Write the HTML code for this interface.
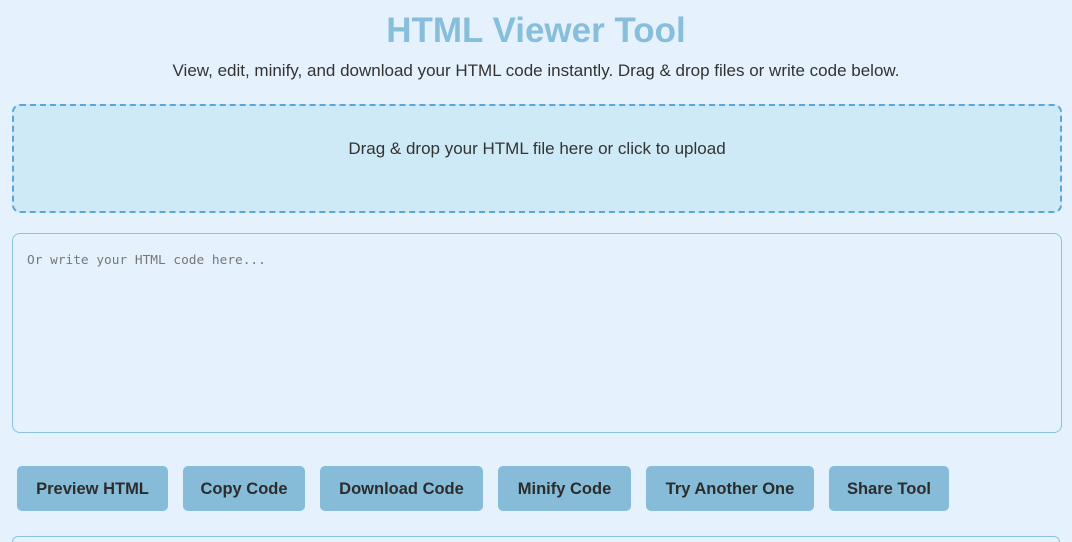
<!DOCTYPE html>
<html><head><style>
html,body{margin:0;height:542px;overflow:hidden}
body{background:#e5f2fd;font-family:"Liberation Sans",sans-serif;width:1072px;position:relative;color:#333}
h1{position:absolute;top:11px;left:0;width:1072px;text-align:center;margin:0;font-size:35px;color:#86bedb;font-weight:bold}
.sub{position:absolute;top:61px;left:0;width:1072px;text-align:center;font-size:17px;color:#333}
.drop{position:absolute;left:12px;top:104px;width:1046px;height:105px;background:#cfeaf7;border:2px dashed #5aa5d9;border-radius:8px}
.drop span{position:absolute;top:33px;left:0;width:100%;text-align:center;font-size:17px;color:#333}
.ta{position:absolute;left:12px;top:233px;width:1048px;height:198px;border:1px solid #8cc3dc;border-radius:8px;background:#e5f2fd}
.ta span{position:absolute;left:14px;top:19px;font-family:"DejaVu Sans Mono","Liberation Mono",monospace;font-size:12.8px;color:#777}
.b{position:absolute;top:466px;height:45px;padding-top:2px;box-sizing:border-box;background:#86bcd8;border-radius:5px;font-family:"Liberation Sans",sans-serif;font-weight:bold;font-size:16.5px;color:#2c2c2c;display:flex;align-items:center;justify-content:center}
.bot{position:absolute;left:12px;top:536px;width:1048px;height:6px;border:1px solid #8cc3dc;border-bottom:none;border-radius:8px 8px 0 0;box-sizing:border-box}
</style></head><body>
<h1>HTML Viewer Tool</h1>
<div class="sub">View, edit, minify, and download your HTML code instantly. Drag &amp; drop files or write code below.</div>
<div class="drop"><span>Drag &amp; drop your HTML file here or click to upload</span></div>
<div class="ta"><span>Or write your HTML code here...</span></div>
<div class="b" style="left:17px;width:151px">Preview HTML</div>
<div class="b" style="left:183px;width:122px">Copy Code</div>
<div class="b" style="left:320px;width:163px">Download Code</div>
<div class="b" style="left:498px;width:133px">Minify Code</div>
<div class="b" style="left:646px;width:168px">Try Another One</div>
<div class="b" style="left:829px;width:120px">Share Tool</div>
<div class="bot"></div>
</body></html>
